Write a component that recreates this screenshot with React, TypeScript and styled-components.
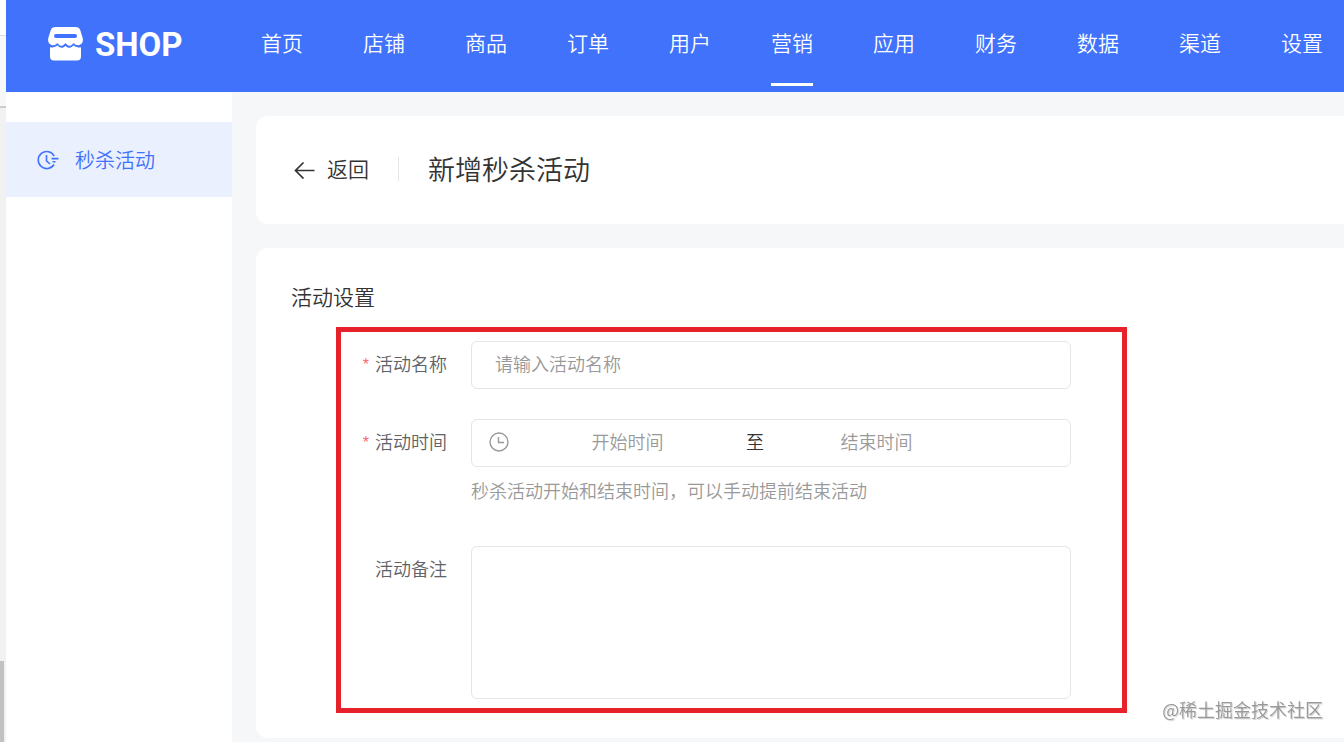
import React from "react";
import styled, { createGlobalStyle } from "styled-components";

const GlobalStyle = createGlobalStyle`
  *, *::before, *::after { box-sizing: border-box; }
  body {
    margin: 0;
    background: #f5f7f9;
    color: #333;
    font-family: "Noto Sans CJK SC", sans-serif;
    font-size: 18px;
    font-weight: 350;
  }
  button, input, textarea { font: inherit; color: inherit; }
`;

const Frame = styled.div`
  display: flex;
  min-height: 100vh;
`;

const Gutter = styled.div`
  flex: 0 0 6px;
  display: flex;
  flex-direction: column;
  background: #f1f1f1;
`;

const GutterTop = styled.div`
  height: 36px;
  background: #fff;
  border-bottom: 1px solid #ddd;
`;

const GutterBar = styled.div`
  height: 72px;
  background: #f6f7f8;
  border-bottom: 2px solid #ccc;
`;

const GutterThumb = styled.div`
  width: 4px;
  height: 81px;
  margin-top: auto;
  background: #c1c1c1;
`;

const Page = styled.div`
  flex: 1;
  min-width: 0;
  display: flex;
  flex-direction: column;
`;

const TopBar = styled.header`
  display: flex;
  align-items: stretch;
  height: 92px;
  padding-left: 42px;
  background: #4072fc;
  color: #fff;
  overflow: hidden;
`;

const Brand = styled.a`
  flex: 0 0 213px;
  display: flex;
  align-items: center;
  gap: 12px;
  padding-bottom: 4px;
  color: inherit;
  text-decoration: none;
  font-family: Roboto, sans-serif;
  font-size: 33px;
  font-weight: 700;
`;

const Nav = styled.nav`
  display: flex;
  gap: 60px;
`;

const NavLink = styled.a<{ $active?: boolean }>`
  flex: none;
  height: 86px;
  border-bottom: 3px solid ${(p) => (p.$active ? "#fff" : "transparent")};
  color: inherit;
  font-size: 21px;
  line-height: 84px;
  text-decoration: none;
`;

const Body = styled.div`
  flex: 1;
  display: flex;
`;

const Sidebar = styled.aside`
  flex: 0 0 226px;
  padding-top: 30px;
  background: #fff;
`;

const SideLink = styled.a`
  display: flex;
  align-items: center;
  gap: 15px;
  height: 75px;
  padding-left: 31px;
  background: #ebf0ff;
  color: #4072fc;
  font-size: 20px;
  text-decoration: none;
`;

const Main = styled.main`
  flex: 1;
  min-width: 0;
  display: flex;
  flex-direction: column;
  gap: 24px;
  padding: 24px 0 4px 24px;
`;

const TitleCard = styled.section`
  display: flex;
  align-items: center;
  height: 108px;
  padding: 0 0 2px 38px;
  border-radius: 12px 0 0 12px;
  background: #fff;
`;

const BackButton = styled.button`
  display: flex;
  align-items: center;
  gap: 12px;
  padding: 0 29px 2px 0;
  border: 0;
  background: none;
  font-size: 21px;
  line-height: 32px;
  cursor: pointer;
`;

const Title = styled.h1`
  margin: 0;
  font-size: 27px;
  font-weight: inherit;
  line-height: 40px;
`;

const Divider = styled.span`
  width: 1px;
  height: 24px;
  margin-right: 29px;
  background: #e4e4e4;
`;

const SettingsCard = styled.section`
  padding: 32px 35px 25px;
  border-radius: 12px 0 0 12px;
  background: #fff;
`;

const SectionTitle = styled.h2`
  margin: 0 0 15px;
  font-size: 21px;
  font-weight: inherit;
  line-height: 32px;
`;

const Form = styled.form`
  display: flex;
  flex-direction: column;
  gap: 30px;
  max-width: 791px;
  margin-left: 45px;
  padding: 9px 51px 9px 0;
  border: 5px solid #e6212a;
`;

const Row = styled.div`
  display: flex;
  gap: 24px;
`;

const Label = styled.label<{ $required?: boolean }>`
  flex: 0 0 106px;
  color: #606266;
  line-height: 44px;
  text-align: right;

  &::before {
    content: ${(p) => (p.$required ? '"*"' : "none")};
    margin-right: 6px;
    color: #f56c6c;
    font-family: "Liberation Sans", sans-serif;
    font-size: 16px;
    line-height: 1;
    vertical-align: 1px;
  }
`;

const Field = styled.div`
  flex: 1;
  min-width: 0;
`;

const TextInput = styled.input`
  display: block;
  width: 100%;
  height: 48px;
  padding: 0 23px 4px;
  border: 1px solid #e5e5e5;
  border-radius: 6px;
  background: #fff;
  outline: 0;
  &::placeholder { color: #999; opacity: 1; }
`;

const Range = styled.div`
  display: flex;
  align-items: center;
  height: 48px;
  padding: 0 17px 2px;
  border: 1px solid #e5e5e5;
  border-radius: 6px;
  color: #999;

  svg { flex: none; }
`;

const RangeInput = styled.input`
  flex: 0 1 237px;
  min-width: 0;
  padding: 0 0 2px;
  border: 0;
  background: none;
  outline: 0;
  text-align: center;
  &::placeholder { color: #999; opacity: 1; }
`;

const RangeSeparator = styled.span`
  flex: 0 0 12px;
  min-width: 0;
  padding-bottom: 2px;
  color: #333;
  white-space: nowrap;
`;

const Hint = styled.p`
  margin: 10px 0 12px;
  color: #999;
  line-height: 27px;
`;

const TextArea = styled.textarea`
  display: block;
  width: 100%;
  height: 153px;
  padding: 10px 23px;
  border: 1px solid #e5e5e5;
  border-radius: 6px;
  outline: 0;
  resize: none;
`;

const Watermark = styled.div`
  position: fixed;
  right: 21px;
  bottom: 19px;
  color: #999;
  line-height: 27px;
  text-shadow: 1px 1px 1px #ccc;
`;

const ShopIcon = () => (
  <svg width="35" height="34" viewBox="0 0 35 34" aria-hidden="true">
    <path
      fill="#fff"
      d="M7.500 0h20q3.600 0 4.800 3.200L34.700 11c.9 4-1.500 7.200-4.700 7.200-2.900 0-3.700-2-4.500-2S24 18.800 21.600 18.800s-3.200-2.600-4.100-2.600-1.800 2.600-4.100 2.600-3.200-2.600-4-2.600-1.500 2-4.400 2C1.800 18.200-.6 15 .3 11L2.700 3.200Q3.900 0 7.500 0Z"
    />
    <rect x="6" y="7" width="23" height="4" rx="2" fill="#4072fc" />
    <path
      fill="#fff"
      d="M2 20.200c3 .6 5.500 0 7.400-1.900 2.300 3.200 5.700 3.200 8.100.4 2.400 2.800 5.800 2.800 8.100-.4 1.900 1.900 4.400 2.500 7.400 1.900V29.500q0 4-4 4H6q-4 0-4-4Z"
    />
  </svg>
);

const FlashClockIcon = () => (
  <svg width="23" height="20" viewBox="0 0 23 20" fill="none" stroke="currentColor" strokeWidth="1.600" aria-hidden="true">
    <path d="M17.200 6A8.500 8.500 0 1 0 17 14.500" />
    <path d="M9.500 5v6l3.500 3M14.500 8.600H21.500M15.500 11.700h3" />
  </svg>
);

const ClockIcon = () => (
  <svg width="20" height="20" viewBox="0 0 20 20" fill="none" stroke="currentColor" strokeWidth="1.400" aria-hidden="true">
    <circle cx="10" cy="10" r="9" />
    <path d="M9.500 5v5.500H15" />
  </svg>
);

const ArrowIcon = () => (
  <svg width="21" height="22" viewBox="0 0 21 22" fill="none" stroke="currentColor" strokeWidth="1.700" aria-hidden="true">
    <path d="M9.500 5.500 1.500 13.500l8 8M1.500 13.500H20.500" />
  </svg>
);

const navItems = ["首页", "店铺", "商品", "订单", "用户", "营销", "应用", "财务", "数据", "渠道", "设置"];

export default function App() {
  return (
    <>
      <GlobalStyle />
      <Frame>
        <Gutter>
          <GutterTop />
          <GutterBar />
          <GutterThumb />
        </Gutter>
        <Page>
          <TopBar>
            <Brand href="#">
              <ShopIcon />
              SHOP
            </Brand>
            <Nav>
              {navItems.map((item) => (
                <NavLink key={item} href="#" $active={item === "营销"}>
                  {item}
                </NavLink>
              ))}
            </Nav>
          </TopBar>
          <Body>
            <Sidebar>
              <SideLink href="#">
                <FlashClockIcon />
                秒杀活动
              </SideLink>
            </Sidebar>
            <Main>
              <TitleCard>
                <BackButton type="button">
                  <ArrowIcon />
                  返回
                </BackButton>
                <Divider />
                <Title>新增秒杀活动</Title>
              </TitleCard>
              <SettingsCard>
                <SectionTitle>活动设置</SectionTitle>
                <Form>
                  <Row>
                    <Label htmlFor="name" $required>活动名称</Label>
                    <Field>
                      <TextInput id="name" type="text" placeholder="请输入活动名称" />
                    </Field>
                  </Row>
                  <Row>
                    <Label htmlFor="start" $required>活动时间</Label>
                    <Field>
                      <Range>
                        <ClockIcon />
                        <RangeInput id="start" type="text" placeholder="开始时间" />
                        <RangeSeparator>至</RangeSeparator>
                        <RangeInput type="text" aria-label="结束时间" placeholder="结束时间" />
                      </Range>
                      <Hint>秒杀活动开始和结束时间，可以手动提前结束活动</Hint>
                    </Field>
                  </Row>
                  <Row>
                    <Label htmlFor="remark">活动备注</Label>
                    <Field>
                      <TextArea id="remark" />
                    </Field>
                  </Row>
                </Form>
              </SettingsCard>
            </Main>
          </Body>
        </Page>
      </Frame>
      <Watermark>@稀土掘金技术社区</Watermark>
    </>
  );
}
